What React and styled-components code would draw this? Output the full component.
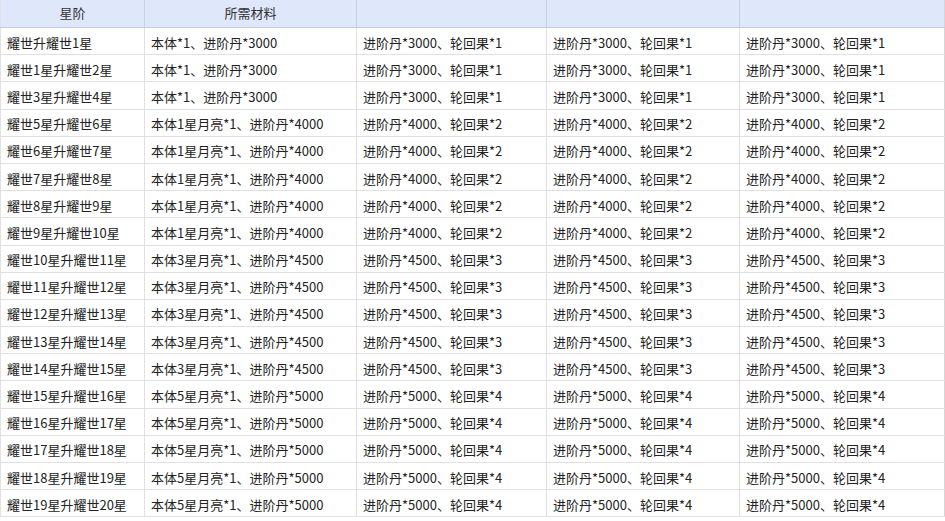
import React from "react";
import styled, { createGlobalStyle } from "styled-components";

const Global = createGlobalStyle`
	html, body {
		margin: 0;
		padding: 0;
		background: #fff;
	}
	body {
		font-family: "Noto Sans CJK SC", "Microsoft YaHei", sans-serif;
		font-size: 13px;
		color: #222;
	}
`;

const Table = styled.table`
	border-collapse: collapse;
	table-layout: fixed;
	width: 944px;
	border-left: 1px solid #e2e2e2;
	border-right: 1px solid #d6d6d6;
`;

const Th = styled.th`
	height: 26px;
	padding: 0 0 1px;
	background: #dfe7fb;
	font-weight: normal;
	text-align: center;
	color: #333;
	line-height: 16px;
	border-bottom: 1px solid #c3cbe0;
	border-right: 1px solid #c9d0e2;
	&:last-child {
		border-right: none;
	}
`;

const Td = styled.td`
	height: 23.2px;
	padding: 3px 0 0 6px;
	white-space: nowrap;
	line-height: 16px;
	border-bottom: 1px solid #e0e0e0;
	border-right: 1px solid #e0e0e0;
	&:last-child {
		border-right: none;
	}
`;

const widths = [144, 212, 190, 193, 205];

const tiers = [
	{ from: ["耀世升耀世1星", "耀世1星升耀世2星", "耀世3星升耀世4星"], base: "本体", dan: 3000, fruit: 1 },
	{ from: [5, 6, 7, 8, 9], base: "本体1星月亮", dan: 4000, fruit: 2 },
	{ from: [10, 11, 12, 13, 14], base: "本体3星月亮", dan: 4500, fruit: 3 },
	{ from: [15, 16, 17, 18, 19], base: "本体5星月亮", dan: 5000, fruit: 4 },
];

const rows = tiers.flatMap((t) =>
	t.from.map((f) => ({
		name: typeof f === "string" ? f : `耀世${f}星升耀世${f + 1}星`,
		need: `${t.base}*1、进阶丹*${t.dan}`,
		extra: `进阶丹*${t.dan}、轮回果*${t.fruit}`,
	}))
);

const App = () => {
	return (
		<>
			<Global />
			<Table>
				<colgroup>
					{widths.map((w, i) => (
						<col key={i} style={{ width: w }} />
					))}
				</colgroup>
				<thead>
					<tr>
						<Th>星阶</Th>
						<Th>所需材料</Th>
						<Th></Th>
						<Th></Th>
						<Th></Th>
					</tr>
				</thead>
				<tbody>
					{rows.map((r) => (
						<tr key={r.name}>
							<Td>{r.name}</Td>
							<Td>{r.need}</Td>
							<Td>{r.extra}</Td>
							<Td>{r.extra}</Td>
							<Td>{r.extra}</Td>
						</tr>
					))}
				</tbody>
			</Table>
		</>
	);
};

export default App;
